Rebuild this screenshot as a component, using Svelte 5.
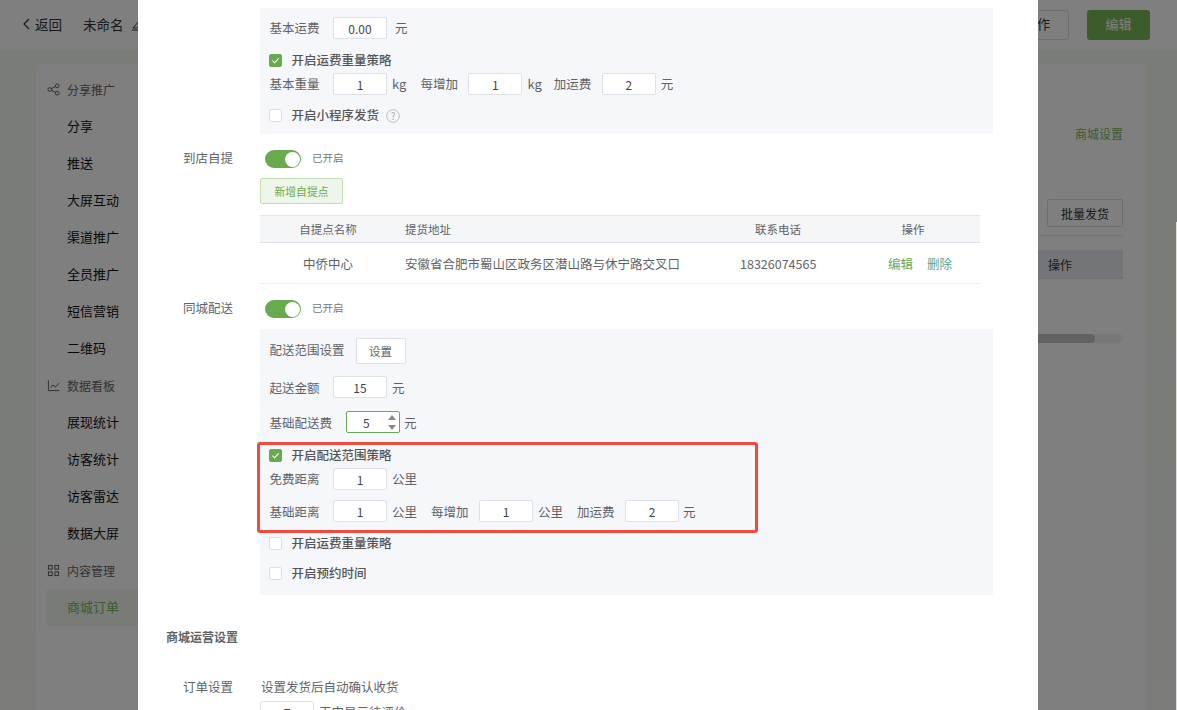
<script>
  const menu = [
    { title: '分享推广', icon: 'share', items: ['分享', '推送', '大屏互动', '渠道推广', '全员推广', '短信营销', '二维码'] },
    { title: '数据看板', icon: 'chart', items: ['展现统计', '访客统计', '访客雷达', '数据大屏'] },
    { title: '内容管理', icon: 'grid', items: ['商城订单'] }
  ];
</script>

{#snippet check(on)}
  <span class="cb" class:on>
    {#if on}<svg viewBox="0 0 13 13" width="13" height="13"><path d="M3.4 6.6l2.2 2.2 4-4.4" fill="none" stroke="#fff" stroke-width="1.1"/></svg>{/if}
  </span>
{/snippet}

{#snippet field(v)}
  <span class="input">{v}</span>
{/snippet}

{#snippet toggle()}
  <span class="switch"><span class="knob"></span></span><span class="sw-text">已开启</span>
{/snippet}

<div class="page">
  <header class="top">
    <div class="top-left">
      <svg class="back" viewBox="0 0 10 14" width="10" height="14"><path d="M8 2L3 7l5 5" fill="none" stroke="#333" stroke-width="1.2"/></svg>
      <span class="back-t">返回</span>
      <span class="name">未命名</span>
      <svg class="pen" viewBox="0 0 14 14" width="14" height="14"><path d="M2 11l7-8 3 2.500-6.500 5.500zM1 13h12" fill="none" stroke="#333" stroke-width="1"/></svg>
    </div>
    <div class="top-right">
      <span class="btn-ghost">操作</span>
      <span class="btn-green">编辑</span>
    </div>
  </header>
  <div class="bg-body">
    <div class="card">
      <aside class="side">
        {#each menu as g}
          <div class="g-title">
            {#if g.icon === 'share'}
              <svg viewBox="0 0 14 14" width="13" height="13"><g fill="none" stroke="#555" stroke-width="1"><circle cx="3" cy="7" r="2"/><circle cx="11" cy="3" r="2"/><circle cx="11" cy="11" r="2"/><path d="M4.800 6l4.400-2.200M4.800 8l4.400 2.200"/></g></svg>
            {:else if g.icon === 'chart'}
              <svg viewBox="0 0 14 14" width="13" height="13"><path d="M1.500 1.500v11h12M3.500 9.500l3-3 2.500 2 4-4" fill="none" stroke="#555" stroke-width="1"/></svg>
            {:else}
              <svg viewBox="0 0 14 14" width="13" height="13"><g fill="none" stroke="#555" stroke-width="1"><rect x="1.500" y="1.500" width="4" height="4"/><rect x="8.500" y="1.500" width="4" height="4"/><rect x="1.500" y="8.500" width="4" height="4"/><rect x="8.500" y="8.500" width="4" height="4"/></g></svg>
            {/if}
            <span>{g.title}</span>
          </div>
          {#each g.items as it}
            <div class="s-item" class:active={it === '商城订单'}>{it}</div>
          {/each}
        {/each}
      </aside>
      <main class="bg-main">
        <div class="link">商城设置</div>
        <div class="batch"><span>批量发货</span></div>
        <div class="rule"></div>
        <div class="th"><span>操作</span></div>
        <div class="track"><div class="thumb"></div></div>
      </main>
    </div>
  </div>
</div>

<div class="mask"></div>
<div class="edge"></div>

<div class="modal">
  <div class="form">
    <section class="panel p1">
      <div class="line l-fee"><span class="lb">基本运费</span>{@render field('0.00')}<span class="unit">元</span></div>
      <label class="line l-chk">{@render check(true)}<span class="ct">开启运费重量策略</span></label>
      <div class="line l-w">
        <span class="lb">基本重量</span>{@render field('1')}<span class="unit k">kg</span>
        <span class="lb2">每增加</span>{@render field('1')}<span class="unit k">kg</span>
        <span class="lb3">加运费</span>{@render field('2')}<span class="unit u2">元</span>
      </div>
      <label class="line l-mini">{@render check(false)}<span class="ct">开启小程序发货</span>
        <svg class="q" viewBox="0 0 14 14" width="14" height="14"><circle cx="7" cy="7" r="6.300" fill="none" stroke="#bbb"/><text x="7" y="10.500" text-anchor="middle" font-size="10" fill="#aaa">?</text></svg>
      </label>
    </section>

    <div class="frow r-pick"><span class="flabel">到店自提</span><div class="fc">{@render toggle()}</div></div>
    <div class="add-wrap"><span class="add">新增自提点</span></div>

    <div class="table">
      <div class="tr head">
        <span class="c1">自提点名称</span><span class="c2">提货地址</span><span class="c3">联系电话</span><span class="c4">操作</span>
      </div>
      <div class="tr body">
        <span class="c1">中侨中心</span><span class="c2">安徽省合肥市蜀山区政务区潜山路与休宁路交叉口</span><span class="c3">18326074565</span>
        <span class="c4 ops"><em>编辑</em><em class="del">删除</em></span>
      </div>
    </div>

    <div class="frow r-city"><span class="flabel">同城配送</span><div class="fc">{@render toggle()}</div></div>

    <section class="panel p2">
      <div class="line l-range"><span class="lb">配送范围设置</span><span class="set">设置</span></div>
      <div class="line l-min"><span class="lb">起送金额</span>{@render field('15')}<span class="unit u2">元</span></div>
      <div class="line l-base">
        <span class="lb">基础配送费</span>
        <span class="input focus"><span class="fv">5</span>
          <span class="spin"><i class="up"></i><i class="down"></i></span>
        </span>
        <span class="unit u3">元</span>
      </div>
      <div class="hl">
        <label class="line l-rchk">{@render check(true)}<span class="ct">开启配送范围策略</span></label>
        <div class="line l-free"><span class="lb">免费距离</span>{@render field('1')}<span class="unit u4">公里</span></div>
        <div class="line l-dist">
          <span class="lb">基础距离</span>{@render field('1')}<span class="unit u4">公里</span>
          <span class="lb4">每增加</span>{@render field('1')}<span class="unit u4">公里</span>
          <span class="lb5">加运费</span>{@render field('2')}<span class="unit u5">元</span>
        </div>
      </div>
      <label class="line l-w2">{@render check(false)}<span class="ct">开启运费重量策略</span></label>
      <label class="line l-time">{@render check(false)}<span class="ct">开启预约时间</span></label>
    </section>

    <h3 class="sec">商城运营设置</h3>
    <div class="frow r-order"><span class="flabel">订单设置</span><div class="fc od">设置发货后自动确认收货</div></div>
    <div class="line l-days">{@render field('7')}<span class="unit u6">天内显示待评价</span></div>
  </div>
</div>

<style>
  :global(body) { margin: 0; font-family: "Noto Sans CJK SC", "Noto Sans", sans-serif; overflow: hidden; }
  * { box-sizing: border-box; }

  .page { width: 1177px; height: 710px; display: flex; flex-direction: column; color: #333; overflow: hidden; }
  .top { height: 50px; background: #fff; display: flex; justify-content: space-between; flex: none; padding: 10px 27px 0 21px; }
  .top-left { display: flex; align-items: center; height: 30px; font-size: 13.500px; padding-bottom: 3px; }
  .back { margin-top: 1px; }
  .back-t { margin-left: 4px; }
  .name { margin-left: 21px; }
  .pen { margin-left: 7px; }
  .top-right { display: flex; gap: 18px; font-size: 13px; }
  .btn-ghost { width: 100px; height: 30px; border: 1px solid #dcdcdc; border-radius: 3px; display: flex; align-items: center; justify-content: flex-end; padding: 0 18px 3px 0; }
  .btn-green { width: 63px; height: 30px; background: #78b856; color: #fff; border-radius: 3px; display: flex; align-items: center; justify-content: center; padding-bottom: 3px; }
  .bg-body { flex: 1; padding: 14px 31px 0 36px; background: linear-gradient(#f2f8ee, #f2f8ee 180px, #f8f9f6); }
  .card { background: #fff; height: 100%; border-radius: 4px 4px 0 0; display: flex; padding: 7px 23px 0 10px; }
  .side { width: 270px; flex: none; }
  .g-title { height: 37px; display: flex; align-items: center; padding-left: 1px; font-size: 12px; color: #666; gap: 7px; }
  .s-item { height: 37px; line-height: 36px; padding-left: 21px; font-size: 13px; color: #111; border-radius: 4px; }
  .s-item.active { color: #78b856; background: #f0f6ec; }
  .bg-main { flex: 1; font-size: 12px; margin-top: -7px; }
  .link { text-align: right; color: #78b856; margin-top: 61px; line-height: 18px; }
  .batch { display: flex; justify-content: flex-end; margin-top: 56px; }
  .batch span { width: 76px; height: 28px; border: 1px solid #ddd; border-radius: 2px; display: flex; align-items: center; justify-content: center; }
  .rule { height: 1px; background: #e6e6e6; margin-top: 8px; }
  .th { height: 29px; background: #e9ebf0; margin-top: 14px; border-bottom: 1px solid #dfe1e8; display: flex; justify-content: flex-end; align-items: center; padding-right: 51px; }
  .track { height: 9px; background: #f0f0f0; margin-top: 55px; border-radius: 5px; }
  .thumb { height: 9px; width: 95%; background: #c4c4c4; border-radius: 5px; max-width: 958px; margin-left: auto; margin-right: 28px; }

  .mask { position: fixed; inset: 0; background: rgba(0,0,0,.5); }
  .edge { position: fixed; right: 0; top: 222px; bottom: 0; width: 1px; background: #dcdcdc; }

  .modal { position: fixed; left: 138px; top: 0; width: 900px; height: 710px; background: #fff; overflow: hidden; color: #5f6368; font-size: 12.500px; }
  .form { padding: 8px 45px 0 122px; }

  .panel { background: #f6f7fb; width: 733px; padding: 0 0 0 9.500px; position: relative; }
  .p1 { height: 126px; }
  .p2 { height: 266px; margin-top: 2px; }

  .line { display: flex; align-items: center; }
  .lb, .lb2, .lb3, .lb4, .lb5, .unit, .ct { padding-bottom: 2px; }
  .lb { width: 63.500px; flex: none; }
  .input { width: 54px; height: 22px; background: #fff; border: 1px solid #dfe1e8; border-radius: 2px; display: inline-flex; align-items: center; justify-content: center; color: #444; flex: none; font-size: 12px; }
  .unit { margin-left: 8px; flex: none; }
  .k { margin-left: 5px; font-size: 13px; }
  .lb2 { margin-left: 14px; width: 48px; flex: none; }
  .lb3 { margin-left: 12px; width: 48px; flex: none; }
  .u2 { margin-left: 5px; }
  .u3 { margin-left: 4px; }
  .u4 { margin-left: 5px; }
  .u5 { margin-left: 4px; }
  .lb4 { margin-left: 14px; width: 48px; flex: none; }
  .lb5 { margin-left: 14px; width: 48px; flex: none; }
  .l-min .lb, .l-min .unit, .l-base .lb, .l-base .unit, .l-dist .lb, .l-dist .lb4, .l-dist .lb5, .l-dist .unit { padding-bottom: 0; }
  .l-range .lb { padding-bottom: 4px; }

  .cb { width: 13px; height: 13px; border: 1px solid #dcdfe6; background: #fff; border-radius: 2px; flex: none; margin: 0 9.500px 0 -0.500px; display: block; position: relative; }
  .cb.on { background: #6aaa4e; border-color: #6aaa4e; }
  .cb svg { position: absolute; left: -1px; top: -1px; }
  .ct { color: #555; font-weight: 500; }

  .l-fee { height: 22px; position: relative; top: 9px; }
  .l-chk { height: 13px; margin-top: 24px; }
  .l-w { height: 22px; margin-top: 6px; }
  .l-mini { height: 13px; margin-top: 14px; }
  .q { margin-left: 7px; }

  .frow { display: flex; align-items: center; height: 18px; }
  .flabel { width: 95px; margin-left: -122px; flex: none; text-align: right; margin-right: 32px; padding-bottom: 3px; }
  .fc { display: flex; align-items: center; }
  .switch { width: 36px; height: 18px; border-radius: 9px; background: #6aaa4e; position: relative; display: block; flex: none; }
  .knob { width: 15px; height: 15px; border-radius: 50%; background: #fff; position: absolute; right: 1.500px; top: 1.500px; }
  .sw-text { margin-left: 11px; font-size: 10.500px; color: #777; padding-bottom: 3px; }
  .r-pick { margin-top: 16px; }
  .r-pick .fc, .r-city .fc { padding-left: 5px; }
  .r-pick .flabel, .r-city .flabel, .r-order .flabel { margin-right: 27px; }
  .add-wrap { margin-top: 10px; height: 26px; }
  .add { display: inline-flex; width: 83px; height: 26px; align-items: center; justify-content: center; background: #eef5ea; border: 1px solid #c2e0b3; border-radius: 2px; color: #6aaa4e; font-size: 10.800px; }

  .table { width: 720px; margin-top: 11px; }
  .tr { display: flex; align-items: center; }
  .head { height: 28px; background: #f5f6f8; border-top: 1px solid #e4e6ec; border-bottom: 1px solid #dfe1e8; font-size: 11.500px; }
  .body { height: 41px; border-bottom: 1px solid #eeeff2; font-size: 12.500px; }
  .c1 { width: 145px; padding-right: 9px; text-align: center; flex: none; }
  .c2 { width: 335px; flex: none; }
  .c3 { width: 76px; text-align: center; flex: none; white-space: nowrap; }
  .c4 { width: 164px; padding-left: 30px; text-align: center; flex: none; }
  .ops { padding-left: 72px; text-align: left; }
  .ops em { font-style: normal; color: #6aaa4e; }
  .ops .del { color: #5ea38a; margin-left: 14px; }
  .r-city { margin-top: 16px; }
  .r-city + .panel { margin-top: 11px; }

  .l-range { height: 26px; position: relative; top: 9px; }
  .l-range .lb { width: auto; }
  .set { width: 50px; height: 26px; border: 1px solid #dfe1e8; background: #fff; border-radius: 2px; margin-left: 11px; display: flex; align-items: center; justify-content: center; font-size: 11.500px; }
  .l-min { height: 22px; margin-top: 17px; position: relative; top: 4px; }
  .l-base { height: 22px; margin-top: 17px; }
  .l-base .lb { width: 76.500px; }
  .focus { border-color: #6aaa4e; position: relative; justify-content: flex-start; padding-left: 16px; }
  .spin { position: absolute; right: 2px; top: 1px; bottom: 1px; width: 11px; }
  .spin i { position: absolute; left: 1.500px; width: 0; height: 0; border-left: 4.500px solid transparent; border-right: 4.500px solid transparent; }
  .up { top: 2px; border-bottom: 5px solid #8a8a8a; }
  .down { bottom: 1px; border-top: 5px solid #8a8a8a; }

  .hl { position: absolute; left: -3px; top: 113px; width: 501px; height: 91px; border: 3px solid #ee4b3f; border-radius: 3px; padding: 4px 0 0 9.500px; }
  .l-rchk { height: 13px; }
  .l-free { height: 22px; margin-top: 6px; }
  .l-dist { height: 22px; margin-top: 10px; }
  .l-w2, .l-time { position: absolute; left: 9.500px; height: 13px; }
  .l-w2 { top: 208px; }
  .l-time { top: 238px; }

  .sec { margin: 33px 0 0 -94px; font-size: 12px; font-weight: 700; color: #5f6368; line-height: 18px; }
  .r-order { margin-top: 32px; }
  .r-order .flabel, .od { padding-bottom: 1px; }
  .od { padding-left: 1px; }
  .l-days { margin-top: 5px; }
  .u6 { margin-left: 5px; }
</style>
